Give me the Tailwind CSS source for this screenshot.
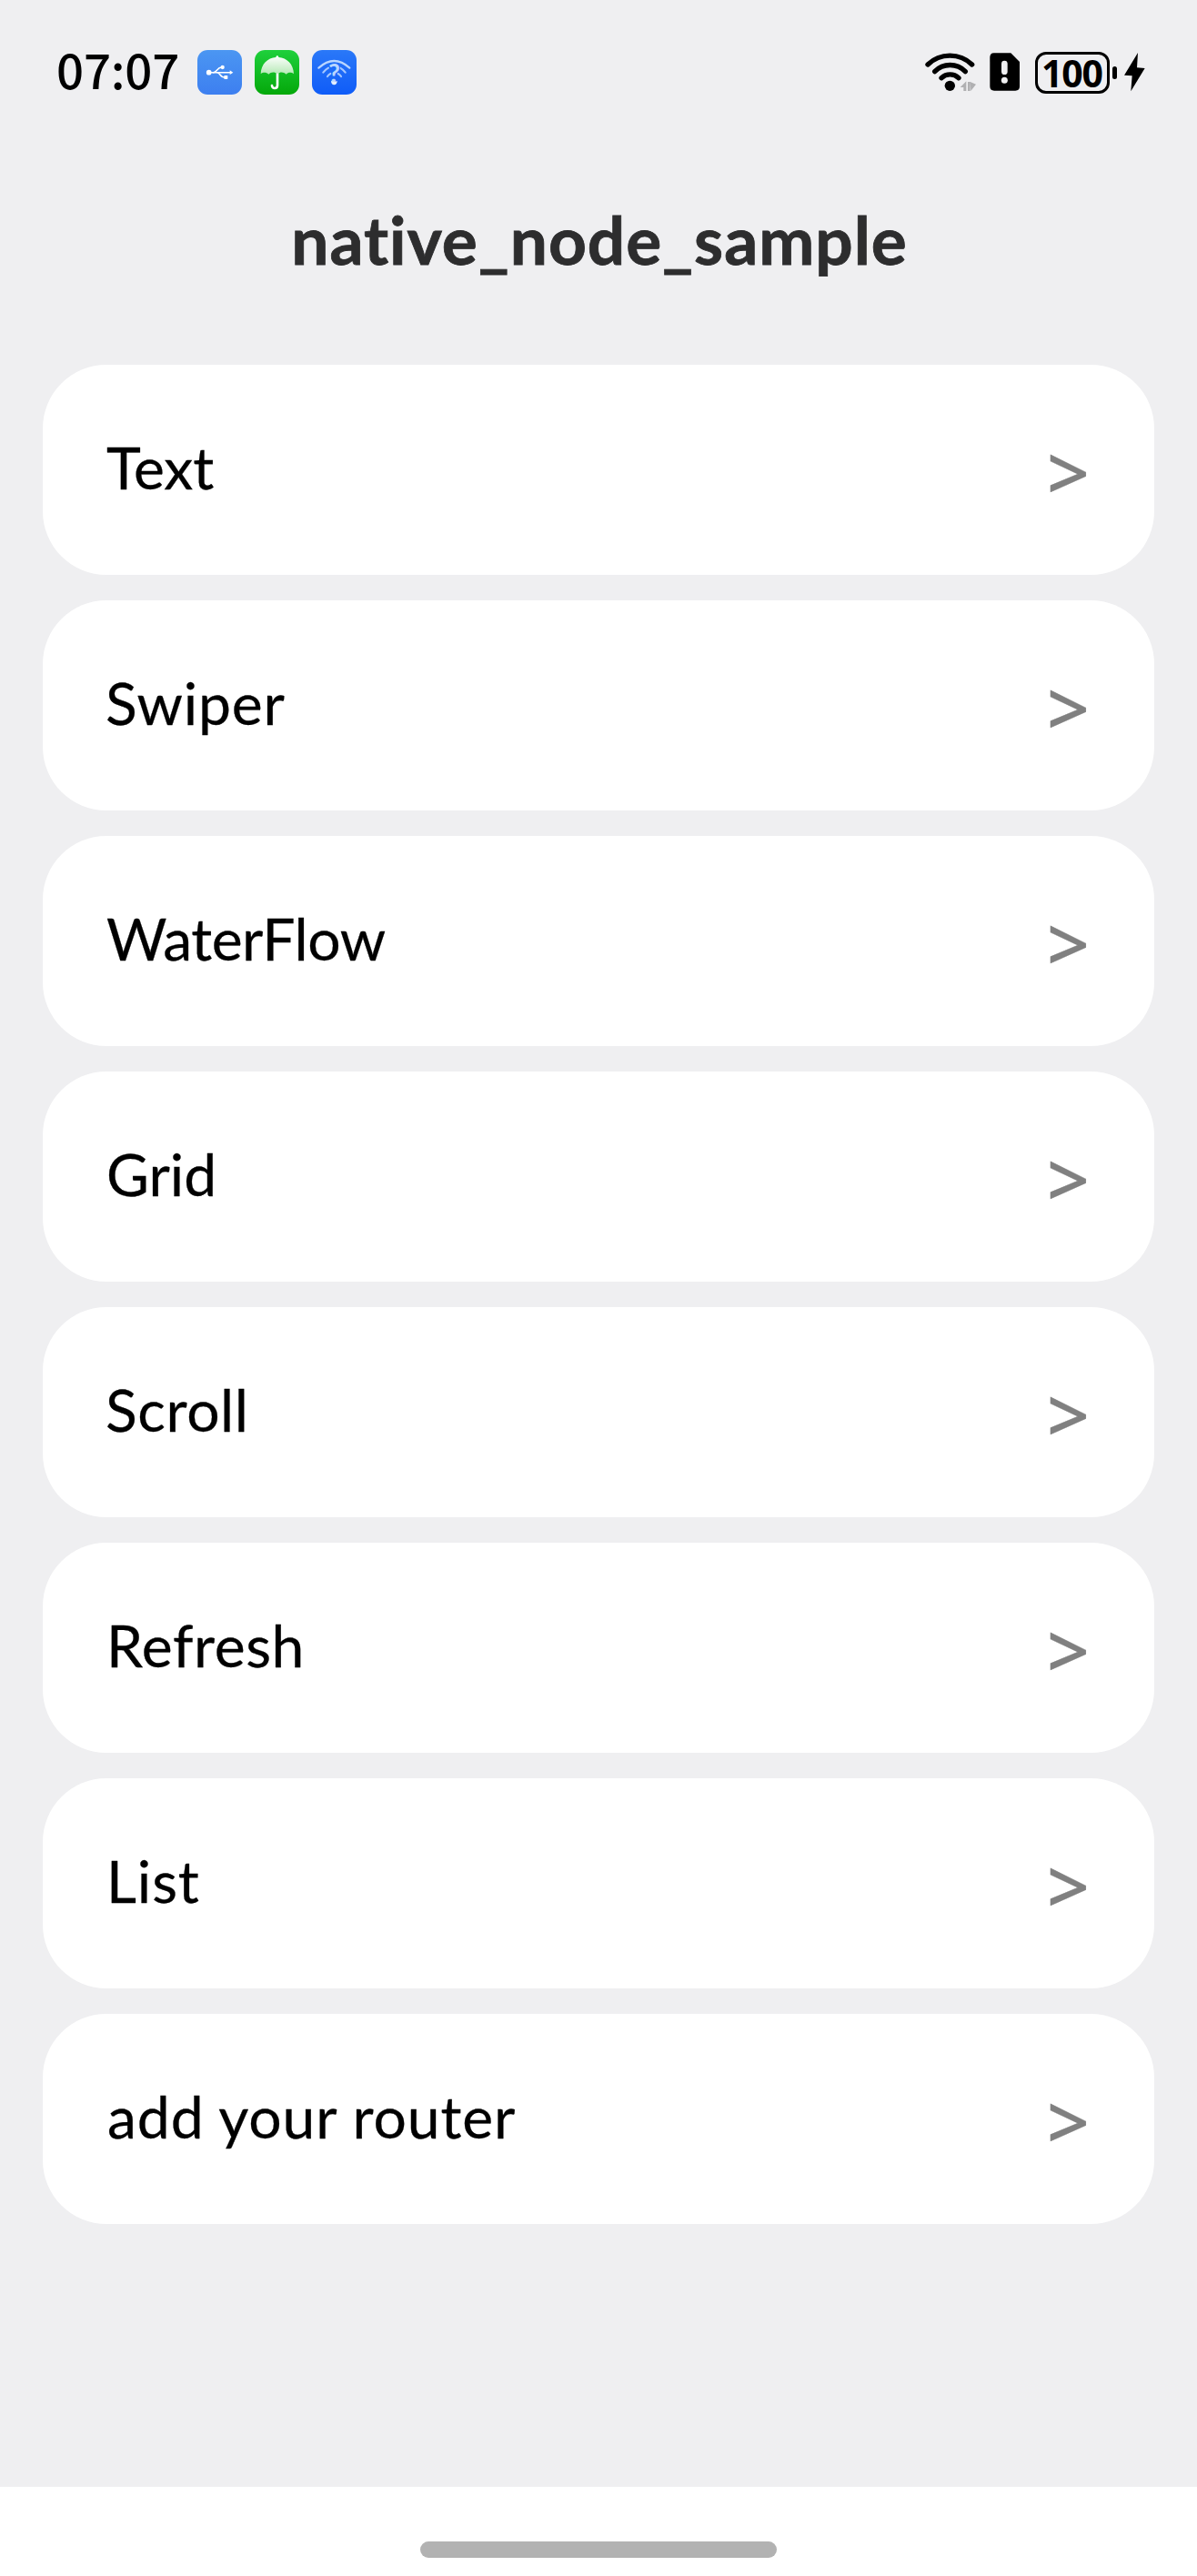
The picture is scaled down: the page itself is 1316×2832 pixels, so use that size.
<!DOCTYPE html>
<html lang="en">
<head>
<meta charset="utf-8">
<title>native_node_sample</title>
<script src="https://cdn.jsdelivr.net/npm/@tailwindcss/browser@4"></script>
</head>
<body class="bg-white">
<div class="flex h-[2832px] w-[1316px] flex-col overflow-hidden font-['Lato',sans-serif]">
  <div class="flex h-[2734px] flex-col bg-[#efeff1]">
    <!-- Status bar -->
    <header class="flex h-[160px] items-center justify-between">
      <div class="flex items-center pl-[62px]">
        <span class="w-[155px] pb-[10px] font-['Noto_Sans_CJK_SC',sans-serif] text-[52.8px] leading-[76px] font-medium tracking-[-0.2px] text-black">07:07</span>
        <div class="flex gap-[14px] pb-[1px]">
          <!-- USB -->
          <svg class="size-[49px]" viewBox="0 0 147 147" fill="none">
            <defs><linearGradient id="gu" x1="0" y1="0" x2="0" y2="1"><stop stop-color="#4b96f2"/><stop offset="1" stop-color="#3d7ff0"/></linearGradient></defs>
            <rect width="147" height="147" rx="34" fill="url(#gu)"/>
            <g stroke="#fff" stroke-width="4.5" stroke-linecap="round" stroke-linejoin="round">
              <path d="M38 74H112"/><path d="M52 74C66 74 64 57 80 57"/><path d="M66 74C76 76 74 90 90 90"/>
            </g>
            <circle cx="38" cy="74" r="8.500" fill="#fff"/><circle cx="83" cy="57" r="6.500" fill="#fff"/><rect x="88" y="84" width="12" height="12" rx="2" fill="#fff"/><path d="M107 67L118 74L107 81Z" fill="#fff"/>
          </svg>
          <!-- Umbrella -->
          <svg class="size-[49px]" viewBox="0 0 147 147" fill="none">
            <defs>
              <linearGradient id="gg" x1="0" y1="0" x2="0" y2="1"><stop stop-color="#1fd03c"/><stop offset="1" stop-color="#04a80a"/></linearGradient>
              <linearGradient id="gd" x1="0" y1="0" x2="0" y2="1"><stop stop-color="#fff"/><stop offset="1" stop-color="#b5e9b5"/></linearGradient>
            </defs>
            <rect width="147" height="147" rx="34" fill="url(#gg)"/>
            <path d="M75 72V116C75 129 57 129 57 117" stroke="#fff" stroke-width="8" stroke-linecap="round"/>
            <path d="M20 79C21 46 43 26 70 24C70 17 79 17 79 24C106 26 128 46 129 79C121 73 111 73 104 80C95 72 84 72 75 79C66 72 54 72 46 80C38 73 27 73 20 79Z" fill="url(#gd)"/>
          </svg>
          <!-- Unknown Wi-Fi -->
          <svg class="size-[49px]" viewBox="0 0 147 147" fill="none">
            <defs><linearGradient id="gw" x1="0" y1="0" x2="0" y2="1"><stop stop-color="#2a78f8"/><stop offset="1" stop-color="#0f5cf8"/></linearGradient></defs>
            <rect width="147" height="147" rx="34" fill="url(#gw)"/>
            <g stroke-linecap="round" stroke-width="6.500">
              <path d="M22 59Q73 13 124 59" stroke="#b9d6ff"/>
              <path d="M37 74Q45 64 54 59M93 59Q102 64 110 74" stroke="#a4c7ff"/>
              <path d="M51 87Q55 81 61 78M86 78Q92 81 96 87" stroke="#a4c7ff"/>
            </g>
            <text x="73" y="109" text-anchor="middle" font-family="Lato" font-weight="700" font-size="84" fill="#b9d6ff" stroke="#1b6af8" stroke-width="5" paint-order="stroke">?</text>
            <path d="M63 101Q73 108 83 101Q83 114 73 115Q63 114 63 101Z" fill="#e3efff"/>
          </svg>
        </div>
      </div>
      <div class="flex items-center pr-[57px]">
        <!-- Wi-Fi -->
        <svg class="h-[46px] w-[57px]" viewBox="51 51 171 138" fill="none">
          <g stroke="#000" stroke-width="16" stroke-linecap="round">
            <path d="M60 93A105 105 0 0 1 206 93"/><path d="M83 116A70 70 0 0 1 184 116"/><path d="M105 137A42 42 0 0 1 162 137"/>
          </g>
          <circle cx="133" cy="163" r="17" fill="#000"/>
          <path d="M167 168L187 148V180H178V168ZM192 150H200V180H192ZM200 150L219 158L202 180Z" fill="#b0b0b2"/>
        </svg>
        <!-- SIM warning -->
        <svg class="ml-[14px] h-[46px] w-[34px]" viewBox="264 51 102 138">
          <path d="M278 55H334L363 84V165Q363 179 349 179H279Q265 179 265 165V69Q265 55 278 55Z" fill="#000"/>
          <rect x="303" y="80" width="20" height="46" rx="10" fill="#efeff1"/><circle cx="313" cy="145" r="10.500" fill="#efeff1"/>
        </svg>
        <!-- Battery -->
        <div class="ml-[16px] flex h-[46px] w-[82px] items-center justify-center rounded-[12px] border-[3.4px] border-black">
          <span class="pr-[1px] pb-[1px] font-['Noto_Sans',sans-serif] text-[41px] leading-[46px] font-bold tracking-[-1.2px] text-black">100</span>
        </div>
        <div class="ml-[3px] h-[14px] w-[5px] rounded-full bg-black"></div>
        <svg class="ml-[7px] h-[46px] w-[24px]" viewBox="705 51 72 138"><path d="M753 54L708 128L734 130L730 181L776 105L750 103Z" fill="#000"/></svg>
      </div>
    </header>

    <!-- Title -->
    <div class="flex h-[241px] justify-center pt-[59px] pl-[2px]">
      <h1 class="text-[73px] leading-[88px] font-bold tracking-[0.95px] text-[#2d2d2e] [-webkit-text-stroke:0.8px_#2d2d2e] [font-variant-ligatures:none]">native_node_sample</h1>
    </div>

    <!-- Routes -->
    <ul class="flex flex-col gap-7 px-[47px] text-[64.2px] leading-[77px] text-black [-webkit-text-stroke:0.3px] *:flex *:h-[231px] *:items-center *:justify-between *:rounded-[70px] *:bg-white *:pr-[71px] *:pl-[70px]">
      <li><span class="pb-[7px] tracking-[-0.1px]">Text</span><span class="pt-[2px] font-['Noto_Sans',sans-serif] text-[82px] leading-none font-medium text-[#808080]">&gt;</span></li>
      <li><span class="-ml-px pb-[7px] tracking-[0.8px]">Swiper</span><span class="pt-[2px] font-['Noto_Sans',sans-serif] text-[82px] leading-none font-medium text-[#808080]">&gt;</span></li>
      <li><span class="pb-[7px] tracking-[-0.5px]">WaterFlow</span><span class="pt-[2px] font-['Noto_Sans',sans-serif] text-[82px] leading-none font-medium text-[#808080]">&gt;</span></li>
      <li><span class="pb-[7px]">Grid</span><span class="pt-[2px] font-['Noto_Sans',sans-serif] text-[82px] leading-none font-medium text-[#808080]">&gt;</span></li>
      <li><span class="-ml-px pb-[7px] tracking-[0.6px]">Scroll</span><span class="pt-[2px] font-['Noto_Sans',sans-serif] text-[82px] leading-none font-medium text-[#808080]">&gt;</span></li>
      <li><span class="pb-[7px] tracking-[0.6px]">Refresh</span><span class="pt-[2px] font-['Noto_Sans',sans-serif] text-[82px] leading-none font-medium text-[#808080]">&gt;</span></li>
      <li><span class="pb-[7px] tracking-[0.9px]">List</span><span class="pt-[2px] font-['Noto_Sans',sans-serif] text-[82px] leading-none font-medium text-[#808080]">&gt;</span></li>
      <li><span class="pb-[7px] pl-px tracking-[0.9px]">add your router</span><span class="pt-[2px] font-['Noto_Sans',sans-serif] text-[82px] leading-none font-medium text-[#808080]">&gt;</span></li>
    </ul>
  </div>

  <!-- Gesture bar -->
  <div class="flex h-[98px] justify-center bg-white pt-[60px]">
    <div class="h-[18px] w-[392px] rounded-full bg-[#b2b2b2]"></div>
  </div>
</div>
</body>
</html>
